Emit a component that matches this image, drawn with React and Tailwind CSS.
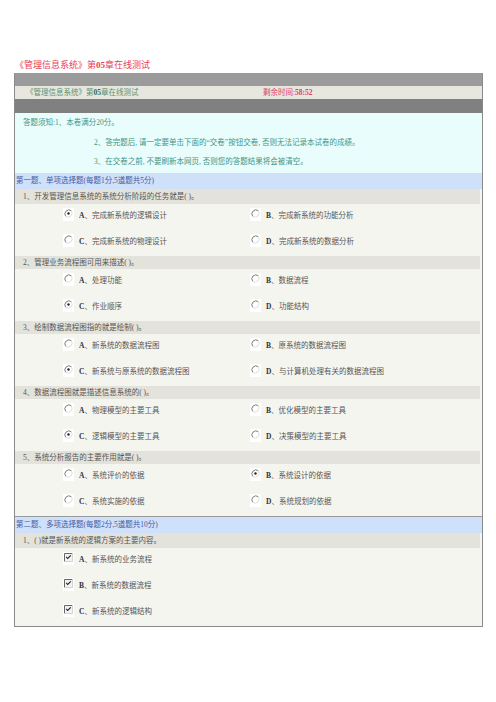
import React from 'react';

const single = [
  {
    q: '1、开发管理信息系统的系统分析阶段的任务就是( )。',
    opts: ['完成新系统的逻辑设计', '完成新系统的功能分析', '完成新系统的物理设计', '完成新系统的数据分析'],
    pick: 0,
  },
  {
    q: '2、管理业务流程图可用来描述( )。',
    opts: ['处理功能', '数据流程', '作业顺序', '功能结构'],
    pick: 2,
  },
  {
    q: '3、绘制数据流程图指的就是绘制( )。',
    opts: ['新系统的数据流程图', '原系统的数据流程图', '新系统与原系统的数据流程图', '与计算机处理有关的数据流程图'],
    pick: 2,
  },
  {
    q: '4、数据流程图就是描述信息系统的( )。',
    opts: ['物理模型的主要工具', '优化模型的主要工具', '逻辑模型的主要工具', '决策模型的主要工具'],
    pick: 2,
  },
  {
    q: '5、系统分析报告的主要作用就是( )。',
    opts: ['系统评价的依据', '系统设计的依据', '系统实施的依据', '系统规划的依据'],
    pick: 1,
  },
];

const multi = {
  q: '1、( )就是新系统的逻辑方案的主要内容。',
  opts: ['新系统的业务流程', '新系统的数据流程', '新系统的逻辑结构'],
};

const letters = ['A', 'B', 'C', 'D'];

function Radio({ on }) {
  return (
    <span className="w-[11px] h-[13px] bg-white flex items-start justify-center pt-[1px] shrink-0">
      <svg width="9" height="9" viewBox="0 0 9 9">
        <circle cx="4.5" cy="4.5" r="4" fill="#fff" />
        <path d="M1.7 7.3 A4 4 0 0 1 7.3 1.7" fill="none" stroke="#7a7a7a" strokeWidth="1" />
        <path d="M7.3 1.7 A4 4 0 0 1 1.7 7.3" fill="none" stroke="#dcdcdc" strokeWidth="1" />
        {on && <circle cx="4.5" cy="4.5" r="1.2" fill="#222" />}
      </svg>
    </span>
  );
}

function Check() {
  return (
    <span className="w-[11px] h-[13px] bg-white flex items-start justify-center pt-[1px] shrink-0">
      <svg width="9" height="9" viewBox="0 0 9 9">
        <rect x="0.5" y="0.5" width="8" height="8" fill="#f2f2f2" />
        <path d="M0.5 8.5 V0.5 H8.5" fill="none" stroke="#666" strokeWidth="1" />
        <path d="M8.5 0.5 V8.5 H0.5" fill="none" stroke="#d4d4d4" strokeWidth="1" />
        <path d="M2.2 3.8 L3.7 5.5 L6.8 2.4" fill="none" stroke="#222" strokeWidth="1.1" />
      </svg>
    </span>
  );
}

function Option({ letter, text, mark }) {
  return (
    <div className="flex items-start gap-[5px]">
      {mark}
      <span className="mt-[2px]">
        <b className="text-[#333]">{letter}</b>、{text}
      </span>
    </div>
  );
}

export default function App() {
  return (
    <div
      className="w-[496px] h-[702px] bg-white text-[7.5px] leading-[12px] text-[#555]"
      style={{ fontFamily: '"Liberation Serif", "Noto Sans CJK SC", serif' }}
    >
      <div className="pt-[59px] pl-[15px] text-[9px] leading-[12px] text-[#e8405a]">
        《管理信息系统》第<b>05</b>章在线测试
      </div>

      <div className="mt-[2px] ml-[14px] w-[469px] border-x border-b border-[#8a8a8a]">
        <div className="h-[13px] bg-[#9b9b9b]" />
        <div className="h-[13px] bg-[#e7e7df] flex items-center">
          <span className="w-[248px] pl-[11px] text-[#5f9070]">
            《管理信息系统》第<b className="text-[#2f6a40]">05</b>章在线测试
          </span>
          <span className="text-[#e0405a]">
            剩余时间:<b>58:52</b>
          </span>
        </div>
        <div className="h-[14px] bg-[#808080]" />

        <div className="h-[60px] bg-[#e9fdfd] text-[#3f9585] pt-[4px]">
          <div className="pl-[8px] h-[19.5px] leading-[12px]">答题须知:1、本卷满分20分。</div>
          <div className="pl-[79px] h-[19.5px] leading-[12px]">
            2、答完题后, 请一定要单击下面的“交卷”按钮交卷, 否则无法记录本试卷的成绩。
          </div>
          <div className="pl-[79px] leading-[12px]">3、在交卷之前, 不要刷新本网页, 否则您的答题结果将会被清空。</div>
        </div>

        <div className="h-[16px] bg-[#cfe0fb] flex items-center pl-[1px] text-[#4a5a9a]">
          第一题、单项选择题(每题1分,5道题共5分)
        </div>

        {single.map((item, qi) => (
          <div key={qi} className="bg-[#f5f5f0]">
            <div
              className={`${qi === 0 ? 'h-[15px]' : 'h-[13px]'} mr-[2px] bg-[#e4e3db] flex items-center pl-[8px] text-[#555]`}
            >
              {item.q}
            </div>
            <div className="grid grid-cols-[187px_1fr] pl-[48px]">
              {item.opts.map((o, oi) => (
                <div key={oi} className="h-[26px] pt-[4px]">
                  <Option letter={letters[oi]} text={o} mark={<Radio on={item.pick === oi} />} />
                </div>
              ))}
            </div>
          </div>
        ))}

        <div className="h-[17px] border-t border-[#9a9a9a] bg-[#cfe0fb] flex items-center pl-[1px] text-[#4a5a9a]">
          第二题、多项选择题(每题2分,5道题共10分)
        </div>
        <div className="bg-[#f5f5f0]">
          <div className="h-[15px] mr-[2px] bg-[#e4e3db] flex items-center pl-[8px]">{multi.q}</div>
          <div className="pl-[48px]">
            {multi.opts.map((o, oi) => (
              <div key={oi} className="h-[26px] pt-[4px]">
                <Option letter={letters[oi]} text={o} mark={<Check />} />
              </div>
            ))}
          </div>
        </div>
      </div>
    </div>
  );
}
